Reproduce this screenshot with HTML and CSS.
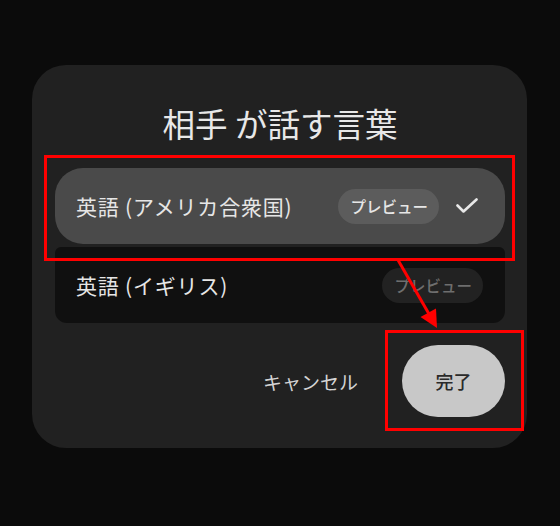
FILE: index.html
```html
<!DOCTYPE html>
<html lang="ja">
<head>
    <meta charset="UTF-8">
    <meta name="viewport" content="width=device-width, initial-scale=1.0">
    <title>相手 が話す言葉</title>
    <link rel="stylesheet" href="styles.css">
</head>
<body>
    <div class="dialog">
        <h1 class="title">相手 が話す言葉</h1>

        <ul class="lang-list">
            <li class="lang selected">
                <span class="lang-name">英語 (アメリカ合衆国)</span>
                <span class="chip">プレビュー</span>
                <svg class="check" width="22" height="16" viewBox="0 0 22 16">
                    <polyline points="1.5,7.5 7.5,13.5 20.5,1.5" fill="none" stroke="#e8e8e8" stroke-width="2.6" stroke-linecap="round" stroke-linejoin="round"/>
                </svg>
            </li>
            <li class="lang">
                <span class="lang-name">英語 (イギリス)</span>
                <span class="chip">プレビュー</span>
            </li>
        </ul>

        <div class="actions">
            <button class="btn-cancel">キャンセル</button>
            <button class="btn-done">完了</button>
        </div>
    </div>

    <!-- annotations -->
    <div class="mark mark-list"></div>
    <div class="mark mark-done"></div>
    <svg class="arrow" width="560" height="526" viewBox="0 0 560 526">
        <line x1="398" y1="260" x2="429" y2="314" stroke="#f00" stroke-width="3"/>
        <polygon points="437,328 420.5,317 436,308.5" fill="#f00"/>
    </svg>
</body>
</html>
```

FILE: styles.css
```css
*{
    margin: 0;
    padding: 0;
    box-sizing: border-box;
}
body{
    height: 100vh;
    background-color: #0b0b0b;
    font-family: "Noto Sans CJK JP", "Noto Sans", sans-serif;
    color: #e6e6e6;
    position: relative;
    overflow: hidden;
}
.dialog{
    width: 495px;
    height: 383px;
    margin: 65px 0 0 32px;
    padding: 0 22px 0 23px;
    background-color: #212121;
    border-radius: 34px;
}
.title{
    font-size: 32.5px;
    font-weight: 400;
    line-height: 40px;
    text-align: center;
    padding-top: 38px;
    color: #e8e8e8;
}
.lang-list{
    list-style-type: none;
    margin-top: 25px;
    display: flex;
    flex-direction: column;
    gap: 3px;
}
.lang{
    display: flex;
    align-items: center;
    height: 76px;
    padding: 0 22px 0 21px;
    background-color: #101010;
    border-radius: 6px 6px 12px 12px;
}
.lang.selected{
    background-color: #4a4a4a;
    border-radius: 28px;
}
.lang-name{
    font-size: 21px;
    letter-spacing: 0.8px;
    margin-right: auto;
}
.chip{
    display: flex;
    align-items: center;
    height: 35px;
    padding: 0 11px 0 12px;
    border-radius: 18px;
    font-size: 15.5px;
    font-weight: 500;
    background-color: #222;
    color: #6e6e6e;
}
.selected .chip{
    background-color: #5c5c5c;
    color: #e6e6e6;
}
.check{
    margin-left: 17px;
    margin-right: 5px;
}
.actions{
    display: flex;
    align-items: center;
    justify-content: flex-end;
    margin-top: 22px;
    gap: 44px;
}
.actions button{
    font-family: inherit;
    border: none;
    font-size: 18px;
}
.btn-cancel{
    background: none;
    color: #d4d4d4;
    font-size: 19px !important;
}
.btn-done{
    width: 103px;
    height: 72px;
    border-radius: 36px;
    background-color: #c8c8c8;
    color: #2a2a2a;
    font-weight: 500;
}
.mark{
    position: absolute;
    border: 3px solid #f00;
}
.mark-list{
    left: 44px;
    top: 155px;
    width: 471px;
    height: 106px;
}
.mark-done{
    left: 385px;
    top: 330px;
    width: 139px;
    height: 101px;
}
.arrow{
    position: absolute;
    left: 0;
    top: 0;
}
```
